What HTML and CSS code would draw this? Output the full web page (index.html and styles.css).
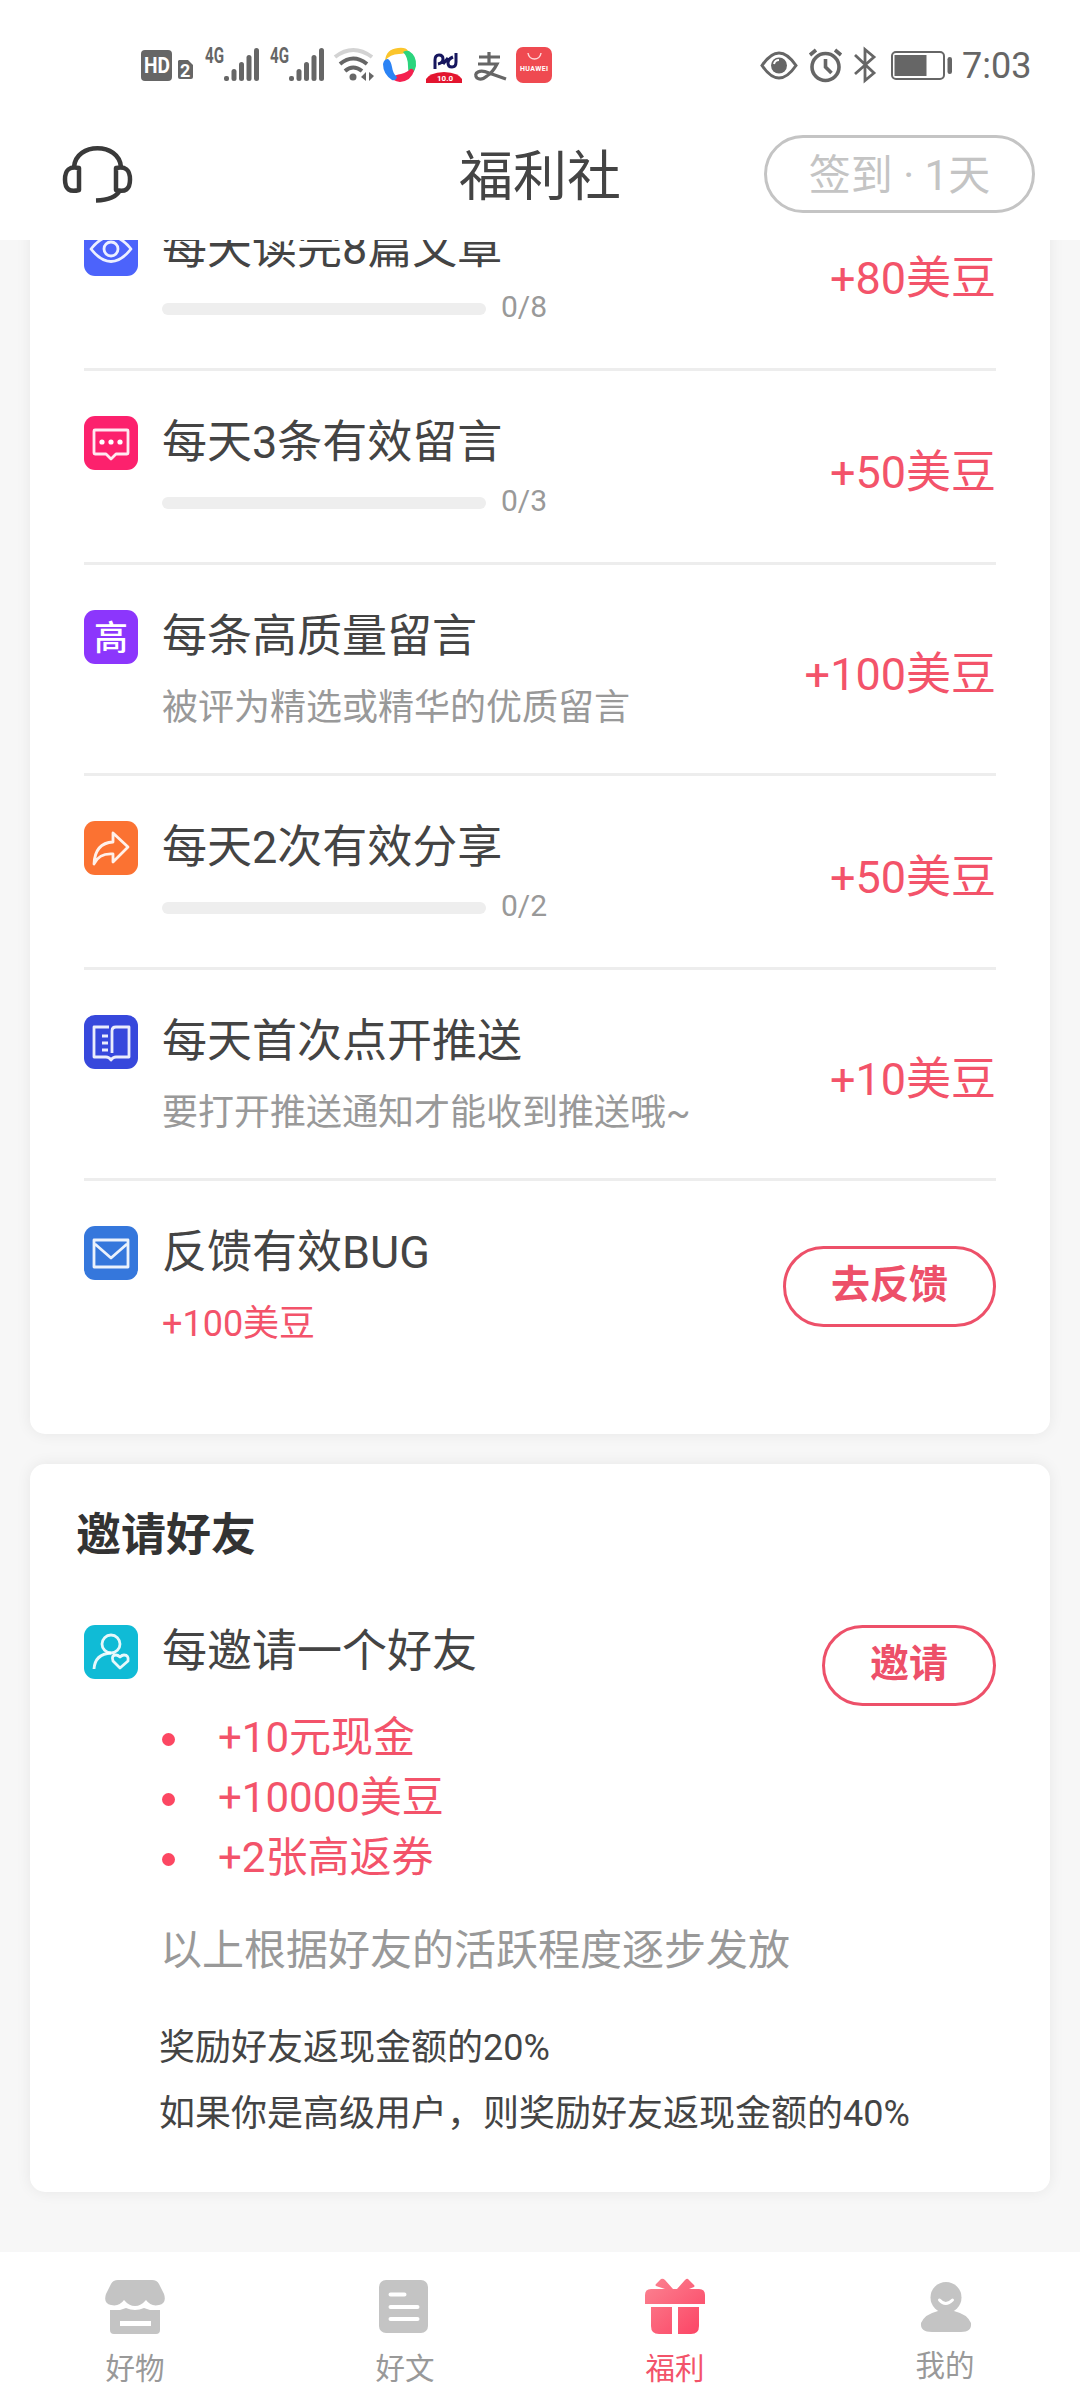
FILE: index.html
```html
<!DOCTYPE html>
<html lang="zh-CN">
<head>
<meta charset="utf-8">
<title>福利社</title>
<link rel="stylesheet" href="styles.css">
</head>
<body>
<div class="app">
  <header class="top">
    <div class="status">
      <svg class="status-left" width="420" height="50" viewBox="0 0 420 50">
        <g fill="#666">
          <rect x="5" y="10" width="31" height="31" rx="4"/>
          <path d="M43 20h9l5 5v12q0 2-2 2H44q-2 0-2-2V21z"/>
          <g id="signal">
            <rect x="88" y="36" width="5" height="5" rx="2"/>
            <rect x="95.500" y="29" width="5" height="12" rx="2.500"/>
            <rect x="103" y="22" width="5" height="19" rx="2.500"/>
            <rect x="110.500" y="15" width="5" height="26" rx="2.500"/>
            <rect x="118" y="8" width="5" height="33" rx="2.500"/>
            <text x="69" y="23" class="net" textLength="19" lengthAdjust="spacingAndGlyphs">4G</text>
          </g>
          <use href="#signal" x="65"/>
        </g>
        <text x="8" y="33" class="hd" textLength="26" lengthAdjust="spacingAndGlyphs">HD</text>
        <text x="44" y="37" class="sim">2</text>
        <g fill="none" stroke-width="4">
          <path d="M199 17q18-14 37 0" stroke="#d3d3d3"/>
          <path d="M204 24q13-11 27 0M209 31q8-7 17 0" stroke="#666"/>
        </g>
        <circle cx="217" cy="37" r="3.500" fill="#666"/>
        <path d="M230 32v9l-5-4zM233 32v9l5-5z" fill="#666"/>
        <path d="M249 21Q250 9 262 8q8-1 10 3-3 3-9 3-9 0-14 7z" fill="#fbc52c"/>
        <path d="M273 11q8 5 7 15-2 8-6 8-2-2-2-8 0-9-5-14 3-2 6-1z" fill="#2bd47d"/>
        <path d="M278 31q-3 10-14 11-8-1-7-5 2-2 8-3 7-2 9-5 3-1 4 2z" fill="#f5204f"/>
        <path d="M256 40q-9-6-9-16 1-5 5-5 3 2 4 8 1 7 5 10-1 4-5 3z" fill="#2b83f5"/>
        <path d="M299 29v-9q0-5 4-5t4 4-5 5M320 13v9q0 5-4 5t-4-4 5-6M307 24l5-6" fill="none" stroke="#16165e" stroke-width="3"/>
        <path d="M290 43v-4q3-6 18-7 15 1 18 7v4z" fill="#e3152f"/>
        <text x="301" y="41" class="badge">10.0</text>
        <path d="M343 17h21M353 12v11M342 24h19q-4 8-10 12-6 5-10 2-3-4 1-6 4-2 11 1l17 6" fill="none" stroke="#666" stroke-width="3.200"/>
        <rect x="380" y="7" width="36" height="36" rx="7" fill="#ef4a51"/>
        <path d="M392 13c1 8 12 8 13 0" fill="none" stroke="#ffd5d6" stroke-width="1.500"/>
        <text x="384" y="31" class="brand" textLength="28">HUAWEI</text>
      </svg>
      <svg class="status-right" width="200" height="50" viewBox="0 0 200 50">
        <g fill="none" stroke="#666" stroke-width="3">
          <path d="M6 25.500q17-25 34 0-17 25-34 0z"/>
          <circle cx="69.500" cy="27" r="13.500" stroke-width="3.600"/>
          <path d="M69.500 19v8l6 6M54 15l6-5M79 10l6 5" stroke-width="3.600"/>
          <path d="M99 15l19 18-9 7.500v-31l9 7.500-19 17" stroke-width="2.800"/>
          <rect x="136" y="12" width="52" height="27" rx="4" stroke-width="2"/>
        </g>
        <circle cx="23" cy="25.500" r="8" fill="#666"/>
        <path d="M18 24q1-4 5-4" fill="none" stroke="#fff" stroke-width="2"/>
        <rect x="138.500" y="15" width="32" height="21" fill="#666"/>
        <rect x="191.500" y="17" width="4.500" height="17" rx="2.200" fill="#666"/>
      </svg>
      <span class="time">7:03</span>
    </div>
    <div class="titlebar">
      <svg class="headset" width="72" height="58" viewBox="0 0 72 58" fill="none" stroke="#3a3a3a" stroke-width="4.500">
        <path d="M12 21C14-4 57-4 59 21"/>
        <path d="M17 22v22Q3 48 3 33.500T17 22z" stroke-linejoin="round"/>
        <path d="M54 22v22q14 4 14-10.500T54 22z" stroke-linejoin="round"/>
        <path d="M58 44q-5 10-24 10.500"/>
      </svg>
      <h1 class="page-title">福利社</h1>
      <div class="checkin">签到 · 1天</div>
    </div>
  </header>

  <main class="content">
    <section class="card tasks">
      <div class="task">
        <svg class="icon" viewBox="0 0 54 54"><rect width="54" height="54" rx="11" fill="#4c63fb"/><g class="line"><path d="M7 27q20-25 40 0-20 25-40 0z"/><circle cx="27" cy="27" r="7"/></g></svg>
        <div class="info"><div class="name">每天读完8篇文章</div><div class="progress"><span class="bar"></span><span class="count">0/8</span></div></div>
        <div class="reward">+80美豆</div>
      </div>
      <div class="task">
        <svg class="icon" viewBox="0 0 54 54"><rect width="54" height="54" rx="11" fill="#fc216d"/><path class="line" d="M11 14h32q1 0 1 1v22q0 1-1 1H32l-5 5-5-5H11q-1 0-1-1V15q0-1 1-1z"/><g fill="#fff"><circle cx="18" cy="26" r="2.600"/><circle cx="27" cy="26" r="2.600"/><circle cx="36" cy="26" r="2.600"/></g></svg>
        <div class="info"><div class="name">每天3条有效留言</div><div class="progress"><span class="bar"></span><span class="count">0/3</span></div></div>
        <div class="reward">+50美豆</div>
      </div>
      <div class="task">
        <svg class="icon" viewBox="0 0 54 54"><rect width="54" height="54" rx="11" fill="#8c36fc"/><text x="10" y="39.500" class="high">高</text></svg>
        <div class="info"><div class="name">每条高质量留言</div><div class="note">被评为精选或精华的优质留言</div></div>
        <div class="reward">+100美豆</div>
      </div>
      <div class="task">
        <svg class="icon" viewBox="0 0 54 54"><rect width="54" height="54" rx="11" fill="#fb7232"/><path class="line" d="M29 12l15 14-15 15v-8q-14-1-19 10Q11 22 29 21z"/></svg>
        <div class="info"><div class="name">每天2次有效分享</div><div class="progress"><span class="bar"></span><span class="count">0/2</span></div></div>
        <div class="reward">+50美豆</div>
      </div>
      <div class="task">
        <svg class="icon" viewBox="0 0 54 54"><rect width="54" height="54" rx="11" fill="#3748dc"/><path class="line" d="M25 12H10v30h12q3 0 5 3 2-3 5-3h13V12H32q-4 0-4 4v22M18 21h6M18 28h6M18 35h6"/></svg>
        <div class="info"><div class="name">每天首次点开推送</div><div class="note">要打开推送通知才能收到推送哦~</div></div>
        <div class="reward">+10美豆</div>
      </div>
      <div class="task">
        <svg class="icon" viewBox="0 0 54 54"><rect width="54" height="54" rx="11" fill="#3577dc"/><path class="line" d="M10 14h34v27H10zM11 18l16 14 16-14"/></svg>
        <div class="info"><div class="name">反馈有效BUG</div><div class="note hot">+100美豆</div></div>
        <button class="action">去反馈</button>
      </div>
    </section>

    <section class="card invite">
      <h2 class="section-title">邀请好友</h2>
      <div class="invite-row">
        <svg class="icon" viewBox="0 0 54 54"><rect width="54" height="54" rx="11" fill="#10bbd6"/><g class="line"><circle cx="27" cy="19" r="9"/><path d="M10 44q1-15 17-16M36 43l-7-7q-2-6 3-6 2 0 4 2 2-2 4-2 5 0 4 6z"/></g></svg>
        <div class="info">
          <div class="name">每邀请一个好友</div>
          <ul class="bonuses"><li>+10元现金</li><li>+10000美豆</li><li>+2张高返券</li></ul>
          <p class="remark">以上根据好友的活跃程度逐步发放</p>
          <p class="rule">奖励好友返现金额的20%<br>如果你是高级用户，则奖励好友返现金额的40%</p>
        </div>
        <button class="action">邀请</button>
      </div>
    </section>
  </main>

  <nav class="tabs">
    <a class="tab">
      <svg width="60" height="60" viewBox="0 0 60 60" fill="#c4c4c4"><path d="M13 4h34q5 0 7 4l5 10q3 9-5 11-8 2-13-5-5 6-11 6t-11-6q-5 7-13 5-8-2-5-11L6 8q2-4 7-4z"/><path d="M5 34h10l6-2q9 4 18 0l6 2h10v20q0 4-4 4H9q-4 0-4-4z"/><path d="M15 45h31v5H15z" fill="#fff"/></svg>
      <span>好物</span>
    </a>
    <a class="tab">
      <svg width="60" height="60" viewBox="0 0 60 60" fill="#c4c4c4"><rect x="4" y="4" width="49" height="53" rx="7"/><path d="M15.500 18.500h14M15.500 31h27M15.500 43h27" stroke="#fff" stroke-width="4" stroke-linecap="round"/></svg>
      <span>好文</span>
    </a>
    <a class="tab active">
      <svg width="60" height="60" viewBox="0 0 60 60"><defs><linearGradient id="pink" x1="0" y1="0" x2="1" y2="1"><stop offset="0" stop-color="#fb8492"/><stop offset="1" stop-color="#fc4263"/></linearGradient></defs><path d="M6 13h14l-9-3q-1-1 0-2l5-5q2-1 4 1l8 9h4l8-9q2-2 3-1l6 6q1 1 0 2l-5 2h10q6 0 6 6v9H0v-9q0-6 6-6zM6 31h21v27H14q-8 0-8-8zM33 31h21v19q0 8-8 8H33z" fill="url(#pink)"/></svg>
      <span>福利</span>
    </a>
    <a class="tab me">
      <svg width="60" height="60" viewBox="0 0 60 60" fill="#c4c4c4"><circle cx="31" cy="21.500" r="15.500"/><path d="M23 35q8-3 16 0 13 3 17 12 1 9-10 9H17Q5 56 6 47q4-9 17-12z"/><path d="M24.500 24q6 7 13 0" fill="none" stroke="#fff" stroke-width="3" stroke-linecap="round"/></svg>
      <span>我的</span>
    </a>
  </nav>
</div>
</body>
</html>
```
FILE: styles.css
```css
* { box-sizing: border-box; margin: 0; padding: 0; }
body {
  width: 1080px;
  font-family: Roboto, "Noto Sans CJK SC", sans-serif;
  color: #444;
  background: #f7f7f7;
}
.app { display: flex; flex-direction: column; height: 2400px; overflow: hidden; }

.top { flex: none; height: 240px; background: #fff; z-index: 1; }
.status { display: flex; height: 130px; padding: 40px 0 0 136px; color: #666; }
.status svg { flex: none; display: block; }
.status-left { margin-right: 200px; }
.status-right { margin-right: 6px; }
.time { font-size: 36px; line-height: 52px; }
.hd { font: bold 22px Roboto, sans-serif; fill: #fff; }
.sim { font: bold 18px Roboto, sans-serif; fill: #fff; }
.net { font: bold 22px Roboto, sans-serif; }
.badge { font: bold 8px Roboto, sans-serif; fill: #fff; }
.brand { font: bold 7px Roboto, sans-serif; fill: #fff; }

.titlebar {
  display: grid;
  grid-template-columns: 1fr auto 1fr;
  align-items: center;
  height: 90px;
  padding: 0 45px 0 62px;
}
.page-title { font-size: 54px; font-weight: 400; line-height: 78px; margin: 5px 0 0 -17px; }
.headset { display: block; }
.checkin {
  justify-self: end;
  width: 271px;
  height: 78px;
  margin-top: -2px;
  border: 3px solid #c4c4c4;
  border-radius: 39px;
  color: #c4c4c4;
  font-size: 42px;
  line-height: 76px;
  text-align: center;
}

.content { flex: 1; min-height: 0; overflow: hidden; padding: 0 30px; }
.card { background: #fff; border-radius: 15px; box-shadow: 0 0 15px rgba(0, 0, 0, 0.07); }
.tasks { margin-top: -63px; padding: 0 54px 45px; }
.task { display: flex; padding: 45px 0 41px; }
.task + .task { border-top: 3px solid #ededed; }
.icon { flex: none; width: 54px; height: 54px; margin-right: 24px; }
.line { fill: none; stroke: #fff; stroke-width: 2.8; stroke-opacity: 0.9; stroke-linejoin: round; }
.high { font: 500 34px "Noto Sans CJK SC", sans-serif; fill: #fff; }
.info { flex: 1; white-space: nowrap; }
.name { font-size: 45px; line-height: 54px; }
.progress { display: flex; align-items: center; gap: 15px; margin-top: 15px; }
.bar { width: 324px; height: 12px; border-radius: 6px; background: #eee; }
.count { margin-top: -2px; font-size: 30px; line-height: 36px; padding-bottom: 2px; color: #999; }
.progress { height: 36px; }
.note { margin-top: 20px; font-size: 36px; line-height: 48px; color: #999; }
.note.hot, .reward { color: #f3536a; }
.reward { align-self: center; font-size: 45px; line-height: 54px; padding-top: 8px; }
.action {
  flex: none;
  height: 81px;
  padding: 0 45px 4px;
  border: 3px solid #ed5069;
  border-radius: 41px;
  background: #fff;
  color: #ed5069;
  font: bold 39px/70px Roboto, "Noto Sans CJK SC", sans-serif;
}
.task .action { margin-top: 20px; }

.invite { height: 728px; margin-top: 30px; padding: 42px 54px 0; }
.section-title { margin-left: -8px; font-size: 45px; line-height: 60px; color: #333; }
.invite-row { display: flex; align-items: flex-start; margin-top: 59px; }
.bonuses { list-style: none; margin-top: 29px; font-size: 42px; line-height: 60px; color: #f3536a; }
.bonuses li { display: flex; align-items: center; gap: 43px; }
.bonuses li::before { content: ""; width: 13px; height: 13px; margin-top: 2px; border-radius: 50%; background: #fc4762; }
.remark { margin: 33px 0 0 -2px; font-size: 42px; line-height: 60px; color: #999; }
.rule { margin: 34px 0 0 -3px; font-size: 36px; line-height: 66px; }
.invite .info { width: 0; }

.tabs { display: flex; flex: none; height: 148px; background: #fff; z-index: 1; }
.tab { flex: 1; display: flex; flex-direction: column; align-items: center; padding-top: 24px; font-size: 29.5px; line-height: 40px; color: #999; }
.tab span { margin-top: 13px; }
.tab.active { color: #f3536a; }
.tab.me span { margin-top: 10px; }
```
